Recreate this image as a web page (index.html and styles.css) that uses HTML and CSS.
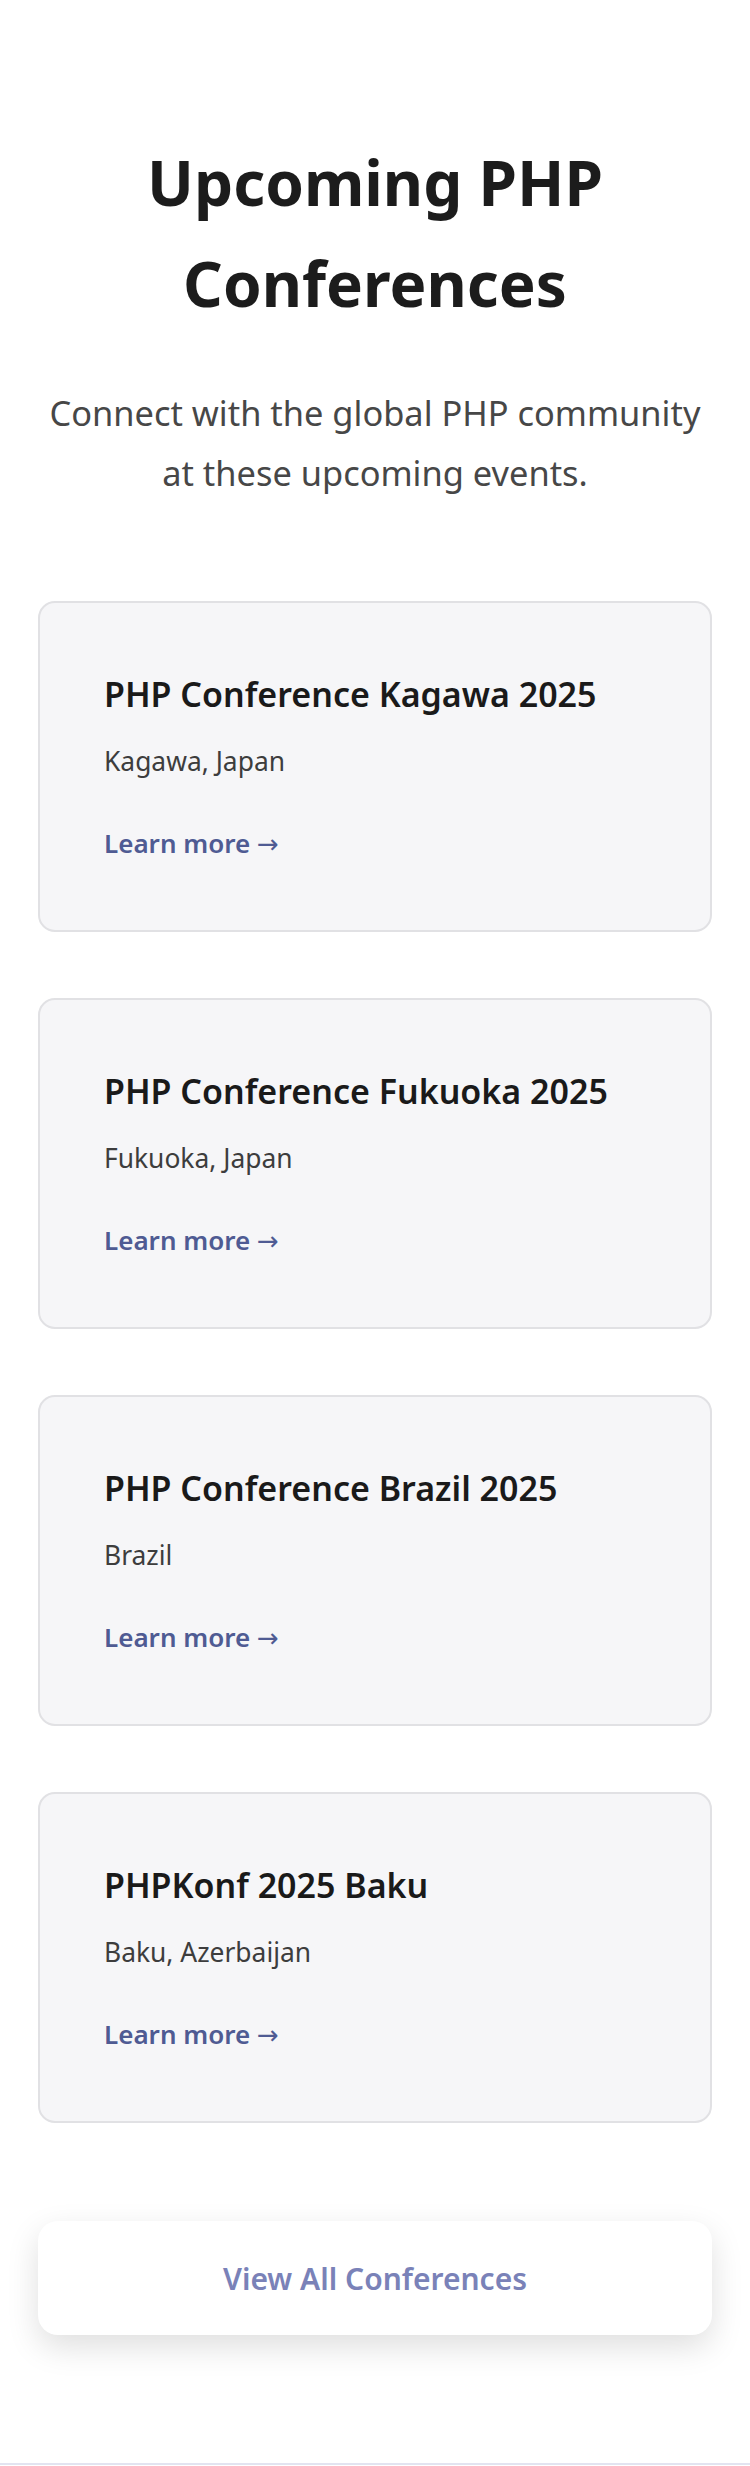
FILE: index.html
```html
<!DOCTYPE html>
<html lang="en">
<head>
<meta charset="utf-8">
<title>Upcoming PHP Conferences</title>
<link rel="stylesheet" href="styles.css">
</head>
<body>
<main class="section">
  <h1 class="heading">Upcoming PHP Conferences</h1>
  <p class="lead">Connect with the global PHP community at these upcoming events.</p>
  <div class="cards">
    <article class="card">
      <h2 class="card-title">PHP Conference Kagawa 2025</h2>
      <p class="card-place">Kagawa, Japan</p>
      <a class="card-link" href="#">Learn more <span class="arrow">→</span></a>
    </article>
    <article class="card">
      <h2 class="card-title">PHP Conference Fukuoka 2025</h2>
      <p class="card-place">Fukuoka, Japan</p>
      <a class="card-link" href="#">Learn more <span class="arrow">→</span></a>
    </article>
    <article class="card">
      <h2 class="card-title">PHP Conference Brazil 2025</h2>
      <p class="card-place">Brazil</p>
      <a class="card-link" href="#">Learn more <span class="arrow">→</span></a>
    </article>
    <article class="card">
      <h2 class="card-title">PHPKonf 2025 Baku</h2>
      <p class="card-place">Baku, Azerbaijan</p>
      <a class="card-link" href="#">Learn more <span class="arrow">→</span></a>
    </article>
  </div>
  <a class="all-btn" href="#">View All Conferences</a>
</main>
<footer class="footer"></footer>
</body>
</html>
```

FILE: styles.css
```css
* { box-sizing: border-box; }
html, body { margin: 0; padding: 0; }
body {
  background: #ffffff;
  font-family: "Noto Sans", "Open Sans", "DejaVu Sans", sans-serif;
  color: #1c1c1c;
}
.section {
  padding: 132px 38px 128px;
  display: flex;
  flex-direction: column;
  align-items: stretch;
}
.heading {
  margin: 0;
  font-size: 62px;
  line-height: 101px;
  font-weight: 700;
  text-align: center;
  color: #1c1c1c;
  padding: 0 60px;
}
.lead {
  margin: 49px 0 0;
  font-size: 34.4px;
  line-height: 60px;
  color: #474747;
  text-align: center;
}
.cards {
  margin-top: 98px;
  display: flex;
  flex-direction: column;
  gap: 66px;
}
.card {
  background: #f6f6f8;
  border: 2px solid #e1e1e4;
  border-radius: 17px;
  padding: 68px 64px 67px;
  display: flex;
  flex-direction: column;
  align-items: flex-start;
}
.card-title {
  margin: 0;
  font-size: 34px;
  line-height: 47px;
  font-weight: 600;
  color: #1a1a1a;
}
.card-place {
  margin: 25px 0 0;
  font-size: 26.4px;
  line-height: 37px;
  color: #3d3d3d;
}
.card-link {
  margin-top: 44px;
  font-size: 26px;
  line-height: 39px;
  font-weight: 600;
  color: #4f5b93;
  text-decoration: none;
}
.arrow {
  font-weight: 400;
}
.all-btn {
  margin-top: 98px;
  height: 114px;
  display: flex;
  align-items: center;
  justify-content: center;
  background: #ffffff;
  border-radius: 20px;
  box-shadow: 0 12px 32px rgba(0, 0, 0, 0.13);
  font-size: 30px;
  font-weight: 600;
  color: #7a82b8;
  text-decoration: none;
}
.footer {
  border-top: 2px solid #e2e4f0;
}
```
